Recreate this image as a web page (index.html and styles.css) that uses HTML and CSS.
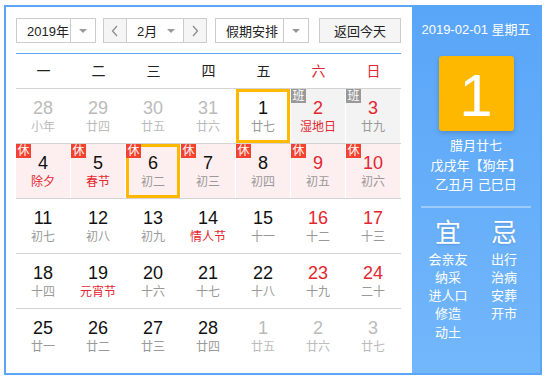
FILE: index.html
```html
<!DOCTYPE html>
<html lang="zh-CN">
<head>
  <meta charset="UTF-8" />
  <title>万年历</title>
  <link rel="stylesheet" href="styles.css">
</head>
<body>
  <div class="calendar">
    <div class="main">
      <!-- Toolbar -->
      <div class="toolbar">
        <div class="select year">
          <span class="select-text">2019年</span>
          <span class="select-arrow"><i class="tri"></i></span>
        </div>
        <div class="month-group">
          <span class="nav-btn">
            <svg width="8" height="12" viewBox="0 0 8 12"><polyline points="6,1 1.5,6 6,11" fill="none" stroke="#888" stroke-width="1.2"/></svg>
          </span>
          <div class="month-mid">
            <span class="select-text">2月</span>
            <i class="tri"></i>
          </div>
          <span class="nav-btn">
            <svg width="8" height="12" viewBox="0 0 8 12"><polyline points="2,1 6.5,6 2,11" fill="none" stroke="#888" stroke-width="1.2"/></svg>
          </span>
        </div>
        <div class="select holiday">
          <span class="select-text">假期安排</span>
          <span class="select-arrow"><i class="tri"></i></span>
        </div>
        <button class="today-btn">返回今天</button>
      </div>

      <!-- Grid -->
      <div class="grid-wrap">
        <div class="week">
          <span>一</span><span>二</span><span>三</span><span>四</span><span>五</span><span class="red">六</span><span class="red">日</span>
        </div>

        <div class="row">
          <div class="cell other"><b>28</b><em>小年</em></div>
          <div class="cell other"><b>29</b><em>廿四</em></div>
          <div class="cell other"><b>30</b><em>廿五</em></div>
          <div class="cell other"><b>31</b><em>廿六</em></div>
          <div class="cell active"><b>1</b><em>廿七</em></div>
          <div class="cell work"><span class="badge gray">班</span><b class="red">2</b><em class="red">湿地日</em></div>
          <div class="cell work"><span class="badge gray">班</span><b class="red">3</b><em>廿九</em></div>
        </div>

        <div class="row">
          <div class="cell rest"><span class="badge">休</span><b>4</b><em class="red">除夕</em></div>
          <div class="cell rest"><span class="badge">休</span><b>5</b><em class="red">春节</em></div>
          <div class="cell rest active"><span class="badge">休</span><b>6</b><em>初二</em></div>
          <div class="cell rest"><span class="badge">休</span><b>7</b><em>初三</em></div>
          <div class="cell rest"><span class="badge">休</span><b>8</b><em>初四</em></div>
          <div class="cell rest"><span class="badge">休</span><b class="red">9</b><em>初五</em></div>
          <div class="cell rest"><span class="badge">休</span><b class="red">10</b><em>初六</em></div>
        </div>

        <div class="row">
          <div class="cell"><b>11</b><em>初七</em></div>
          <div class="cell"><b>12</b><em>初八</em></div>
          <div class="cell"><b>13</b><em>初九</em></div>
          <div class="cell"><b>14</b><em class="red">情人节</em></div>
          <div class="cell"><b>15</b><em>十一</em></div>
          <div class="cell"><b class="red">16</b><em>十二</em></div>
          <div class="cell"><b class="red">17</b><em>十三</em></div>
        </div>

        <div class="row">
          <div class="cell"><b>18</b><em>十四</em></div>
          <div class="cell"><b>19</b><em class="red">元宵节</em></div>
          <div class="cell"><b>20</b><em>十六</em></div>
          <div class="cell"><b>21</b><em>十七</em></div>
          <div class="cell"><b>22</b><em>十八</em></div>
          <div class="cell"><b class="red">23</b><em>十九</em></div>
          <div class="cell"><b class="red">24</b><em>二十</em></div>
        </div>

        <div class="row last">
          <div class="cell"><b>25</b><em>廿一</em></div>
          <div class="cell"><b>26</b><em>廿二</em></div>
          <div class="cell"><b>27</b><em>廿三</em></div>
          <div class="cell"><b>28</b><em>廿四</em></div>
          <div class="cell other"><b>1</b><em>廿五</em></div>
          <div class="cell other"><b>2</b><em>廿六</em></div>
          <div class="cell other"><b>3</b><em>廿七</em></div>
        </div>
      </div>
    </div>

    <!-- Side panel -->
    <div class="side">
      <div class="side-date">2019-02-01 星期五</div>
      <div class="big-day">1</div>
      <div class="lunar">
        <p>腊月廿七</p>
        <p>戊戌年【狗年】</p>
        <p>乙丑月 己巳日</p>
      </div>
      <div class="divider"></div>
      <div class="yiji">
        <div class="yiji-col">
          <h3>宜</h3>
          <p>会亲友</p>
          <p>纳采</p>
          <p>进人口</p>
          <p>修造</p>
          <p>动土</p>
        </div>
        <div class="yiji-col">
          <h3>忌</h3>
          <p>出行</p>
          <p>治病</p>
          <p>安葬</p>
          <p>开市</p>
        </div>
      </div>
    </div>
  </div>
</body>
</html>
```

FILE: styles.css
```css
/* Global */
body {
  margin: 5px 0 0 4px;
  font-family: "Liberation Sans", "Noto Sans CJK SC", sans-serif;
  color: #222;
}
.calendar {
  display: flex;
  width: 538px;
  height: 370px;
  box-sizing: border-box;
  border: 2px solid #5aa6f8;
}
.red {
  color: #e3262f !important;
}

/* Left part */
.main {
  width: 406px;
  padding: 11px 0 0 10px;
  box-sizing: border-box;
}
.toolbar {
  display: flex;
  height: 25px;
  font-size: 13px;
}
.select,
.month-group,
.today-btn {
  display: flex;
  align-items: center;
  height: 25px;
  box-sizing: border-box;
  border: 1px solid #ccc;
  background: #fff;
}
.select-text {
  flex: 1;
  padding-left: 10px;
  white-space: nowrap;
}
.select-arrow {
  width: 24px;
  height: 100%;
  border-left: 1px solid #ccc;
  display: flex;
  align-items: center;
  justify-content: center;
}
.tri {
  width: 0;
  height: 0;
  border-left: 4px solid transparent;
  border-right: 4px solid transparent;
  border-top: 4px solid #999;
}
.year {
  width: 80px;
}
.month-group {
  width: 104px;
  margin-left: 7px;
}
.nav-btn {
  width: 22px;
  height: 100%;
  background: #f5f5f5;
  display: flex;
  align-items: center;
  justify-content: center;
}
.month-mid {
  flex: 1;
  height: 100%;
  display: flex;
  align-items: center;
  border-left: 1px solid #ccc;
  border-right: 1px solid #ccc;
  padding-right: 8px;
}
.holiday {
  width: 94px;
  margin-left: 8px;
}
.today-btn {
  width: 82px;
  margin-left: 10px;
  justify-content: center;
  background: #f5f5f5;
  font-family: inherit;
  font-size: 13px;
  color: #222;
  padding: 0;
}

/* Grid */
.grid-wrap {
  width: 385px;
  margin-top: 10px;
  border-top: 1px solid #5aa6f8;
}
.week {
  display: grid;
  grid-template-columns: repeat(7, 55px);
  height: 34px;
  line-height: 34px;
  border-bottom: 1px solid #d3d3d3;
  text-align: center;
  font-size: 14px;
}
.row {
  display: grid;
  grid-template-columns: repeat(7, 54px);
  column-gap: 1px;
  height: 54px;
  border-bottom: 1px solid #d3d3d3;
}
.row.last {
  border-bottom: none;
}
.cell {
  position: relative;
  text-align: center;
  padding-top: 9px;
  box-sizing: border-box;
  height: 54px;
}
.cell b {
  display: block;
  font-weight: normal;
  font-size: 18px;
  line-height: 21px;
  color: #111;
}
.cell em {
  display: block;
  font-style: normal;
  font-size: 12px;
  line-height: 16px;
  color: #999;
}
.cell.other b,
.cell.other em {
  color: #bbb;
}
.cell.work {
  background: #f3f3f3;
}
.cell.rest {
  background: #fdefef;
}
.cell.active {
  border: 3px solid #ffb800;
  padding-top: 6px;
}
.cell.active .badge {
  top: -3px;
  left: -3px;
}
.badge {
  position: absolute;
  top: 0;
  left: 0;
  width: 15px;
  height: 14px;
  line-height: 14px;
  font-size: 12px;
  color: #fff;
  background: #f5412f;
}
.badge.gray {
  background: #999;
}

/* Side panel */
.side {
  flex: 1;
  background: linear-gradient(#59a5f8, #73b7fb);
  color: #fff;
  text-align: center;
  padding-top: 14px;
  font-family: "Liberation Sans", "Noto Sans CJK SC", sans-serif;
}
.side-date {
  font-size: 13px;
  line-height: 18px;
}
.big-day {
  width: 75px;
  height: 75px;
  margin: 17px auto 0;
  background: #ffb800;
  border-radius: 3px;
  box-shadow: 0 2px 5px rgba(0, 0, 0, 0.18);
  font-size: 60px;
  line-height: 80px;
}
.lunar {
  margin-top: 5px;
  font-size: 13px;
  line-height: 19.5px;
}
.lunar p {
  margin: 0;
}
.divider {
  width: 110px;
  height: 2px;
  margin: 11px auto 0;
  background: rgba(255, 255, 255, 0.35);
}
.yiji {
  display: flex;
  justify-content: center;
  margin-top: 10px;
}
.yiji-col {
  width: 56px;
}
.yiji-col h3 {
  margin: 0 0 3px;
  font-size: 26px;
  font-weight: normal;
  line-height: 30px;
  text-shadow: 0 1px 2px rgba(0, 0, 0, 0.15);
}
.yiji-col p {
  margin: 0;
  font-size: 13px;
  line-height: 18.3px;
}
```
